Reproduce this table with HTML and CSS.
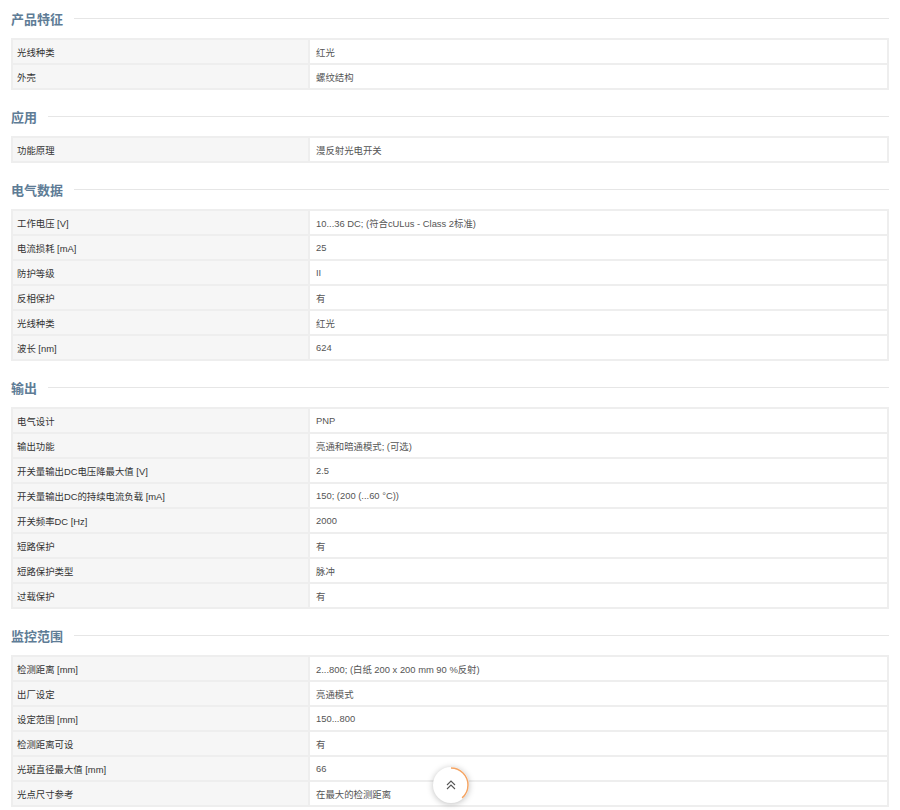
FILE: index.html
```html
<!DOCTYPE html>
<html lang="zh-CN">
<head>
  <meta charset="UTF-8" />
  <meta name="viewport" content="width=device-width, initial-scale=1.0"/>
  <title>技术参数</title>
  <link rel="stylesheet" href="styles.css">
</head>
<body>

  <div id="specs">

    <div class="spec-group">
      <h3 class="spec-title">产品特征</h3>
      <table class="spec-table">
        <tr><td class="label">光线种类</td><td>红光</td></tr>
        <tr><td class="label">外壳</td><td>螺纹结构</td></tr>
      </table>
    </div>

    <div class="spec-group">
      <h3 class="spec-title">应用</h3>
      <table class="spec-table">
        <tr><td class="label">功能原理</td><td>漫反射光电开关</td></tr>
      </table>
    </div>

    <div class="spec-group">
      <h3 class="spec-title">电气数据</h3>
      <table class="spec-table">
        <tr><td class="label">工作电压 [V]</td><td>10...36 DC; (符合cULus - Class 2标准)</td></tr>
        <tr><td class="label">电流损耗 [mA]</td><td>25</td></tr>
        <tr><td class="label">防护等级</td><td>II</td></tr>
        <tr><td class="label">反相保护</td><td>有</td></tr>
        <tr><td class="label">光线种类</td><td>红光</td></tr>
        <tr><td class="label">波长 [nm]</td><td>624</td></tr>
      </table>
    </div>

    <div class="spec-group">
      <h3 class="spec-title">输出</h3>
      <table class="spec-table">
        <tr><td class="label">电气设计</td><td>PNP</td></tr>
        <tr><td class="label">输出功能</td><td>亮通和暗通模式; (可选)</td></tr>
        <tr><td class="label">开关量输出DC电压降最大值 [V]</td><td>2.5</td></tr>
        <tr><td class="label">开关量输出DC的持续电流负载 [mA]</td><td>150; (200 (...60 °C))</td></tr>
        <tr><td class="label">开关频率DC [Hz]</td><td>2000</td></tr>
        <tr><td class="label">短路保护</td><td>有</td></tr>
        <tr><td class="label">短路保护类型</td><td>脉冲</td></tr>
        <tr><td class="label">过载保护</td><td>有</td></tr>
      </table>
    </div>

    <div class="spec-group">
      <h3 class="spec-title">监控范围</h3>
      <table class="spec-table">
        <tr><td class="label">检测距离 [mm]</td><td>2...800; (白纸 200 x 200 mm 90 %反射)</td></tr>
        <tr><td class="label">出厂设定</td><td>亮通模式</td></tr>
        <tr><td class="label">设定范围 [mm]</td><td>150...800</td></tr>
        <tr><td class="label">检测距离可设</td><td>有</td></tr>
        <tr><td class="label">光斑直径最大值 [mm]</td><td>66</td></tr>
        <tr><td class="label">光点尺寸参考</td><td>在最大的检测距离</td></tr>
      </table>
    </div>

  </div>

  <a href="#specs" class="back-top" title="返回顶部">
    <svg class="progress" viewBox="0 0 36 36" width="36" height="36">
      <circle cx="18" cy="18" r="17" fill="none" stroke="#f4a463" stroke-width="1.5"
              stroke-dasharray="41 200" transform="rotate(-90 18 18)"/>
    </svg>
    <svg class="arrows" viewBox="0 0 12 12" width="12" height="12">
      <path d="M2 6 L6 2 L10 6 M2 10 L6 6 L10 10" fill="none" stroke="#555" stroke-width="1.1"/>
    </svg>
  </a>

</body>
</html>
```

FILE: styles.css
```css
* {
  box-sizing: border-box;
}

html, body {
  margin: 0;
  padding: 0;
  background: #fff;
  font-family: "Liberation Sans", "Noto Sans CJK SC", sans-serif;
  overflow: hidden;
}

#specs {
  padding: 8px 11px 0 11px;
}

.spec-group {
  margin-bottom: 16px;
}

.spec-title {
  display: flex;
  align-items: center;
  gap: 11px;
  height: 20px;
  margin: 0 0 10px 0;
  font-size: 13px;
  font-weight: bold;
  color: #5e7c96;
}

.spec-title::after {
  content: "";
  flex: 1;
  height: 1px;
  background: #e6e6e6;
}

.spec-table {
  width: 100%;
  border-collapse: separate;
  border-spacing: 0;
  border-top: 2px solid #eeeeee;
  font-size: 9.4px;
  color: #555;
}

.spec-table td {
  height: 25px;
  padding: 0 6px;
  border-bottom: 2px solid #eeeeee;
  border-right: 2px solid #eeeeee;
  vertical-align: middle;
}

.spec-table td.label {
  width: 299px;
  padding-left: 4px;
  background: #f6f6f6;
  color: #333;
  border-left: 2px solid #eeeeee;
}

.back-top {
  position: fixed;
  left: 433px;
  bottom: 7px;
  width: 36px;
  height: 36px;
  border-radius: 50%;
  background: #fff;
  box-shadow: 0 1px 6px rgba(0,0,0,0.25);
  display: flex;
  align-items: center;
  justify-content: center;
}

.back-top .progress {
  position: absolute;
  left: 0;
  top: 0;
}
```
